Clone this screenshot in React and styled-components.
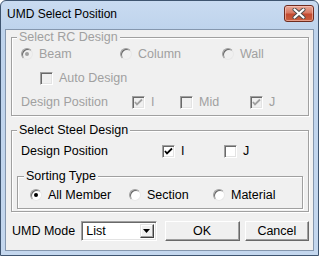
import React from "react";
import styled, { createGlobalStyle } from "styled-components";

const GlobalStyle = createGlobalStyle`
  html, body {
    margin: 0;
    padding: 0;
    background: #ffffff;
  }
  body {
    font-family: "Liberation Sans", Arial, sans-serif;
    font-size: 12.5px;
  }
`;

const Window = styled.div`
  width: 319px;
  height: 256px;
  box-sizing: border-box;
  display: flex;
  flex-direction: column;
  border: 1px solid #3f5570;
  border-radius: 6px 6px 0 0;
  background: linear-gradient(#c9dbf1, #bed3ec 30px, #c4d7ee);
  padding: 0 4px 4px;
`;

const TitleBar = styled.div`
  height: 28px;
  box-sizing: border-box;
  display: flex;
  justify-content: space-between;
  align-items: flex-start;
  padding: 4px 0 0 2px;
`;

const Title = styled.span`
  font-size: 12px;
  line-height: 19px;
  color: #000;
`;

const CloseButton = styled.div`
  width: 30px;
  height: 17px;
  box-sizing: border-box;
  border: 1px solid #6e2b1f;
  border-radius: 3px;
  background: linear-gradient(#e7a796, #d87a64 45%, #c34a30 55%, #c9603f);
  box-shadow: inset 0 0 0 1px rgba(255, 210, 200, 0.55);
  display: flex;
  align-items: center;
  justify-content: center;
`;

const Panel = styled.div`
  flex: 1;
  display: flex;
  flex-direction: column;
  border: 1px solid #8597ae;
  background: #f0f0f0;
  padding: 0 4px 0 5px;
`;

const Group = styled.fieldset`
  margin: ${(p) => p.$margin || "0"};
  padding: ${(p) => p.$padding};
  min-width: 0;
  border: 1px solid #a0a0a0;
  box-shadow: inset 1px 1px 0 #fff, 1px 1px 0 #fff;
  display: flex;
  flex-direction: column;
`;

const Legend = styled.legend`
  padding: 0 2px;
  margin-left: ${(p) => p.$offset}px;
  line-height: 15px;
  background: #f0f0f0;
  color: ${(p) => (p.$disabled ? "#a0a0a0" : "#000")};
`;

const Row = styled.div`
  height: 18px;
  display: grid;
  grid-template-columns: ${(p) => p.$cols || "auto"};
  align-items: center;
  margin: ${(p) => p.$margin || "0"};
`;

const Option = styled.div`
  display: flex;
  align-items: center;
  gap: 6px;
  white-space: nowrap;
  color: ${(p) => (p.$disabled ? "#a0a0a0" : "#000")};
`;

const Text = styled.span`
  white-space: nowrap;
  color: ${(p) => (p.$disabled ? "#a0a0a0" : "#000")};
`;

const Box = styled.span`
  width: 13px;
  height: 13px;
  box-sizing: border-box;
  flex: none;
  display: flex;
  align-items: center;
  justify-content: center;
  border: 1px solid;
  border-color: #a0a0a0 #fff #fff #a0a0a0;
  box-shadow: inset 1px 1px 0 #696969, inset -1px -1px 0 #e3e3e3;
  background: ${(p) => (p.$disabled ? "#f0f0f0" : "#fff")};
`;

const RadioDot = styled.span`
  width: 12px;
  height: 12px;
  box-sizing: border-box;
  flex: none;
  border-radius: 50%;
  border: 1px solid;
  border-color: #a0a0a0 #e8e8e8 #e8e8e8 #a0a0a0;
  box-shadow: inset 1px 1px 0 #696969;
  background: ${(p) => (p.$disabled ? "#f0f0f0" : "#fff")};
  display: flex;
  align-items: center;
  justify-content: center;

  &::after {
    content: "";
    width: 4px;
    height: 4px;
    border-radius: 50%;
    background: ${(p) => (p.$disabled ? "#a0a0a0" : "#000")};
    display: ${(p) => (p.$checked ? "block" : "none")};
  }
`;

const Footer = styled.div`
  display: flex;
  align-items: center;
  height: 20px;
  margin-top: 9px;
`;

const FooterLabel = styled.span`
  width: 70px;
  padding-left: 1px;
  white-space: nowrap;
`;

const Select = styled.div`
  width: 76px;
  height: 20px;
  box-sizing: border-box;
  display: flex;
  align-items: center;
  justify-content: space-between;
  padding: 1px 2px 1px 4px;
  border: 1px solid;
  border-color: #a0a0a0 #fff #fff #a0a0a0;
  box-shadow: inset 1px 1px 0 #696969, inset -1px -1px 0 #e3e3e3;
  background: #fff;
`;

const ArrowButton = styled.span`
  width: 14px;
  height: 14px;
  box-sizing: border-box;
  display: flex;
  align-items: center;
  justify-content: center;
  background: #f0f0f0;
  border: 1px solid;
  border-color: #e3e3e3 #404040 #404040 #e3e3e3;
  box-shadow: inset -1px -1px 0 #a0a0a0, inset 1px 1px 0 #fff;
`;

const Button = styled.div`
  width: ${(p) => p.$width}px;
  height: 20px;
  margin-left: ${(p) => p.$gap}px;
  box-sizing: border-box;
  display: flex;
  align-items: center;
  justify-content: center;
  background: #f0f0f0;
  border: 1px solid;
  border-color: #fff #696969 #696969 #fff;
  box-shadow: inset -1px -1px 0 #a0a0a0;
  color: #000;
`;

function CheckBox({ checked, disabled, label }) {
  const color = disabled ? "#a0a0a0" : "#000";
  return (
    <Option $disabled={disabled}>
      <Box $disabled={disabled}>
        {checked && (
          <svg width="9" height="9" viewBox="0 0 9 9">
            <polyline points="1,4 3,6.5 8,1.5" fill="none" stroke={color} strokeWidth="1.8" />
          </svg>
        )}
      </Box>
      <span>{label}</span>
    </Option>
  );
}

function Radio({ checked, disabled, label }) {
  return (
    <Option $disabled={disabled}>
      <RadioDot $checked={checked} $disabled={disabled} />
      <span>{label}</span>
    </Option>
  );
}

export default function App() {
  return (
    <>
      <GlobalStyle />
      <Window>
        <TitleBar>
          <Title>UMD Select Position</Title>
          <CloseButton>
            <svg width="14" height="11" viewBox="0 0 14 11">
              <path d="M2.5 1.5 L11.5 9.5 M11.5 1.5 L2.5 9.5" stroke="#4a4a4a" strokeWidth="4" strokeLinecap="round" />
              <path d="M2.5 1.5 L11.5 9.5 M11.5 1.5 L2.5 9.5" stroke="#fff" strokeWidth="2.2" strokeLinecap="round" />
            </svg>
          </CloseButton>
        </TitleBar>
        <Panel>
          <Group $padding="0 0 4px 9px">
            <Legend $offset={-4} $disabled>Select RC Design</Legend>
            <Row $cols="99px 102px auto">
              <Radio checked disabled label="Beam" />
              <Radio disabled label="Column" />
              <Radio disabled label="Wall" />
            </Row>
            <Row $margin="6px 0 0 19px">
              <CheckBox disabled label="Auto Design" />
            </Row>
            <Row $cols="111px 48px 70px auto" $margin="6px 0 0">
              <Text $disabled>Design Position</Text>
              <CheckBox checked disabled label="I" />
              <CheckBox disabled label="Mid" />
              <CheckBox checked disabled label="J" />
            </Row>
          </Group>
          <Group $padding="0 5px 2px" $margin="7px 0 0">
            <Legend $offset={0}>Select Steel Design</Legend>
            <Row $cols="141px 62px auto" $margin="4px 0 0 4px">
              <Text>Design Position</Text>
              <CheckBox checked label="I" />
              <CheckBox label="J" />
            </Row>
            <Group $padding="2px 12px 4px" $margin="9px 0 0">
              <Legend $offset={-6}>Sorting Type</Legend>
              <Row $cols="99px 84px auto">
                <Radio checked label="All Member" />
                <Radio label="Section" />
                <Radio label="Material" />
              </Row>
            </Group>
          </Group>
          <Footer>
            <FooterLabel>UMD Mode</FooterLabel>
            <Select>
              <span>List</span>
              <ArrowButton>
                <svg width="7" height="4" viewBox="0 0 7 4">
                  <path d="M0 0 H7 L3.5 4 Z" fill="#000" />
                </svg>
              </ArrowButton>
            </Select>
            <Button $width={76} $gap={8}>OK</Button>
            <Button $width={65} $gap={5}>Cancel</Button>
          </Footer>
        </Panel>
      </Window>
    </>
  );
}
